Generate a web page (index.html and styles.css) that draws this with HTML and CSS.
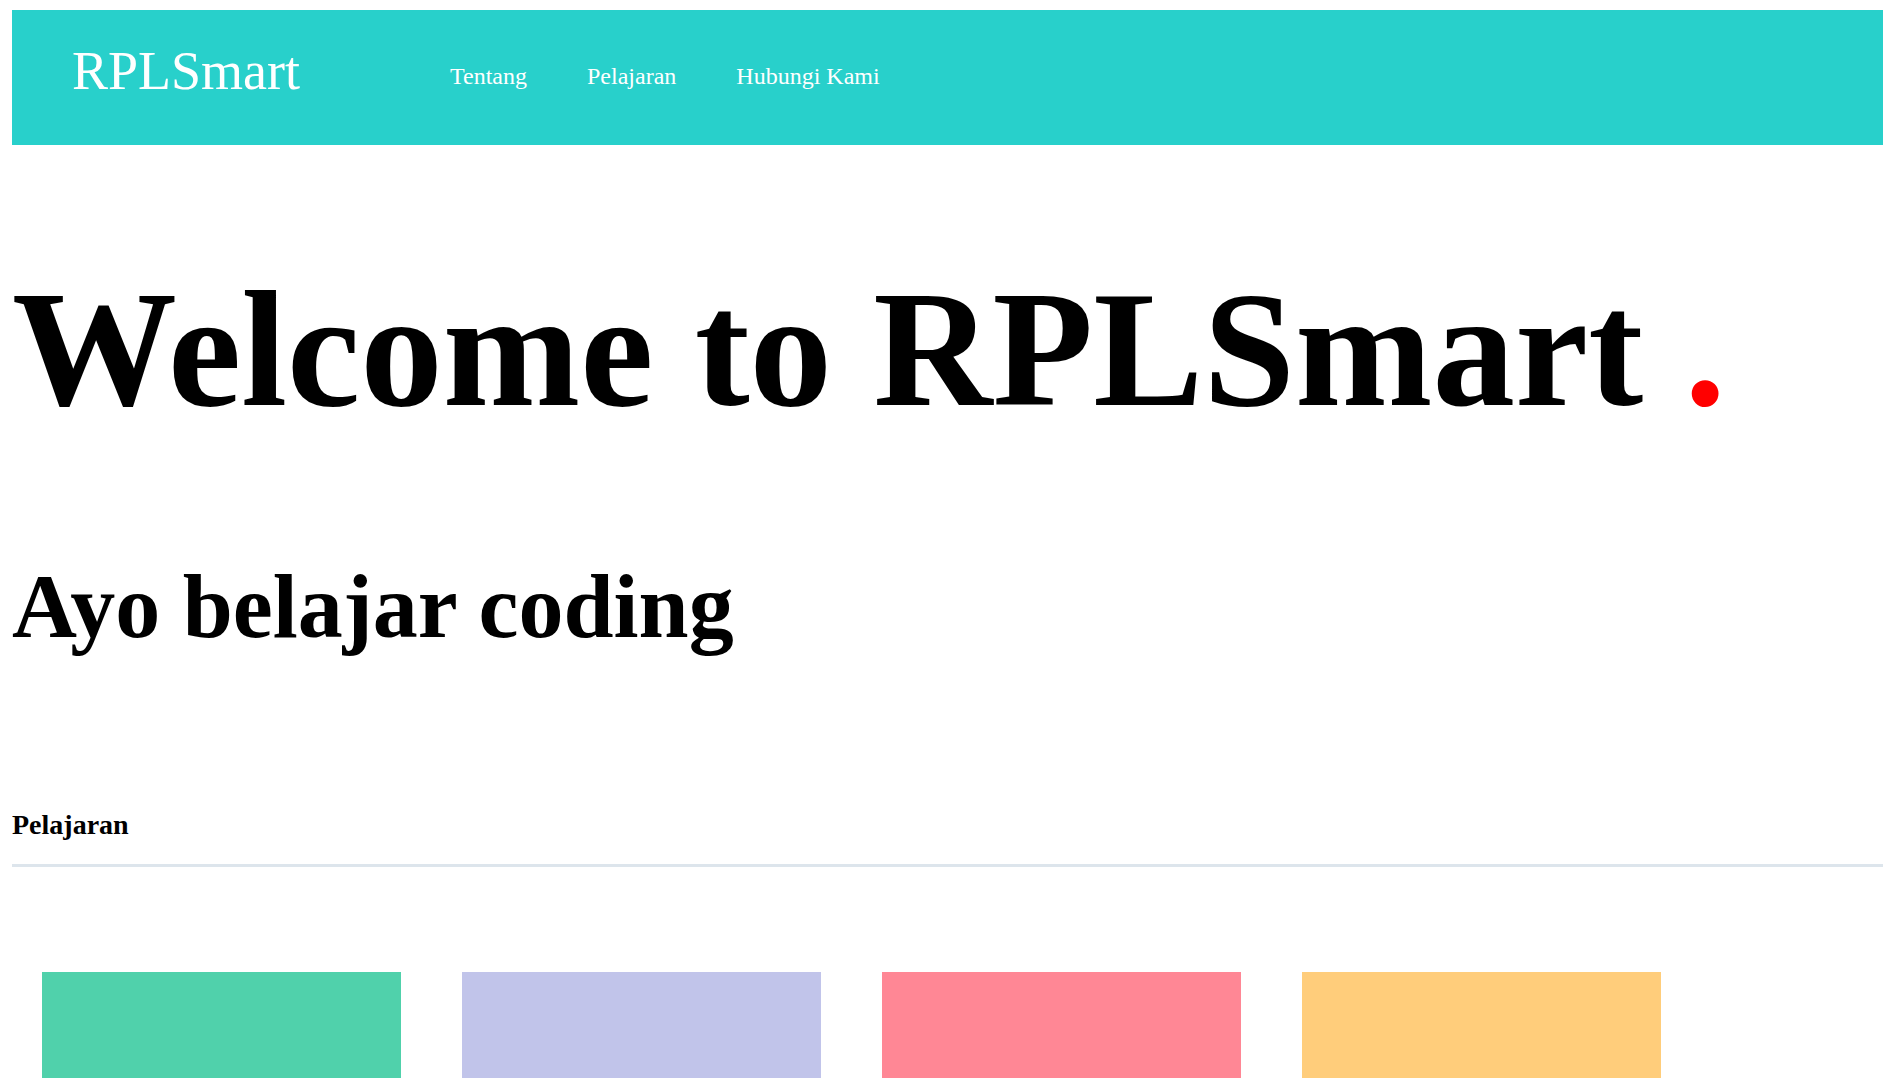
FILE: index.html
```html
<!DOCTYPE html>
<html lang="id">
<head>
<meta charset="utf-8">
<title>RPLSmart</title>
<link rel="stylesheet" href="styles.css">
</head>
<body>
<header class="site-header">
  <div class="logo">RPLSmart</div>
  <nav class="nav">
    <a href="#tentang">Tentang</a>
    <a href="#pelajaran">Pelajaran</a>
    <a href="#kontak">Hubungi Kami</a>
  </nav>
</header>
<main>
  <h1 class="hero-title">Welcome to RPLSmart <span class="dot">.</span></h1>
  <h2 class="hero-sub">Ayo belajar coding</h2>
  <section class="lessons" id="pelajaran">
    <h3 class="section-title">Pelajaran</h3>
    <hr class="divider">
    <div class="cards">
      <div class="card card-green"></div>
      <div class="card card-lavender"></div>
      <div class="card card-pink"></div>
      <div class="card card-yellow"></div>
    </div>
  </section>
</main>
</body>
</html>
```
FILE: styles.css
```css
html, body {
  background: #ffffff;
}
body {
  margin: 10px 6px 0 12px;
  font-family: "Liberation Serif", "Times New Roman", serif;
  color: #000;
}
.site-header {
  background: #28d0cb;
  height: 135px;
  box-sizing: border-box;
  padding: 34px 0 0 60px;
  display: flex;
  align-items: flex-start;
}
.logo {
  color: #fff;
  font-size: 54px;
  line-height: 1;
}
.nav {
  display: flex;
  gap: 60px;
  margin-left: 150px;
  margin-top: 20px;
}
.nav a {
  color: #fff;
  text-decoration: none;
  font-size: 24px;
  line-height: 1;
}
.hero-title {
  margin: 122px 0 0 0;
  font-size: 165px;
  line-height: 1;
  font-weight: bold;
}
.dot {
  color: #ff0000;
}
.hero-sub {
  margin: 130px 0 0 0;
  font-size: 90px;
  line-height: 1;
  font-weight: bold;
}
.section-title {
  margin: 159px 0 0 0;
  font-size: 28px;
  line-height: 1;
  font-weight: bold;
}
.divider {
  margin: 25px 0 0 0;
  border: 0;
  height: 3px;
  background: #dde5ec;
}
.cards {
  display: flex;
  gap: 61px;
  padding-left: 30px;
  margin-top: 105px;
}
.card {
  width: 359px;
  height: 260px;
  flex: none;
}
.card-green { background: #50d1ab; }
.card-lavender { background: #c1c4ea; }
.card-pink { background: #ff8795; }
.card-yellow { background: #ffcd7b; }
```
